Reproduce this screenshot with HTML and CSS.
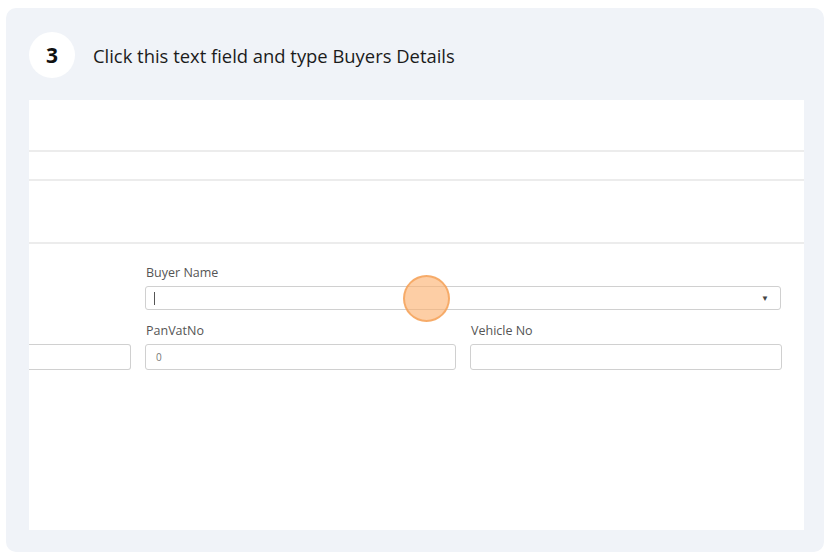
FILE: index.html
```html
<!DOCTYPE html>
<html>
<head>
<meta charset="utf-8">
<link rel="stylesheet" href="styles.css">
</head>
<body>
<div class="card">
  <div class="header">
    <div class="step">3</div>
    <div class="title">Click this text field and type Buyers Details</div>
  </div>
  <div class="shot">
    <div class="sec s1"></div>
    <div class="sec s2"></div>
    <div class="sec s3"></div>
    <div class="form">
      <div class="row row1">
        <div class="col spacer"></div>
        <div class="col wide">
          <div class="label">Buyer Name</div>
          <div class="input select"><span class="caret"></span><span class="arrow">▼</span></div>
        </div>
      </div>
      <div class="row row2">
        <div class="col left">
          <div class="label">&nbsp;</div>
          <div class="input cut"></div>
        </div>
        <div class="col mid">
          <div class="label">PanVatNo</div>
          <div class="input"><span class="val">0</span></div>
        </div>
        <div class="col right">
          <div class="label">Vehicle No</div>
          <div class="input"></div>
        </div>
      </div>
    </div>
    <div class="click"></div>
  </div>
</div>
</body>
</html>
```
FILE: styles.css
```css
html, body { margin: 0; padding: 0; background: #fff; }
body { font-family: "Open Sans", "Liberation Sans", sans-serif; }
.card {
  margin: 8px 6px 0 6px;
  width: 818px;
  height: 544px;
  box-sizing: border-box;
  background: #f0f3f8;
  border-radius: 10px;
  padding: 0 20px 22px 23px;
  display: flex;
  flex-direction: column;
}
.header {
  height: 92px;
  display: flex;
  align-items: center;
  padding-left: 0;
  flex-shrink: 0;
}
.step {
  width: 46px; height: 46px;
  border-radius: 50%;
  background: #fff;
  display: flex; align-items: center; justify-content: center;
  font-weight: 700; font-size: 21px; color: #111;
  margin-top: 2px;
}
.title {
  margin-left: 18px;
  font-size: 18.4px;
  color: #1b1b1b;
  margin-top: 2px;
}
.shot {
  position: relative;
  flex: 1;
  background: #fff;
  display: flex;
  flex-direction: column;
}
.sec { background: #fff; }
.s1 { height: 50px; border-bottom: 2px solid #ececec; }
.s2 { height: 27px; border-bottom: 2px solid #ececec; }
.s3 { height: 61px; border-bottom: 2px solid #ececec; }
.form { padding-top: 21px; }
.row { display: flex; }
.row1 { height: 58px; }
.col { display: flex; flex-direction: column; }
.spacer { width: 116px; }
.wide { width: 636px; }
.left { width: 102px; }
.mid { width: 311px; margin-left: 14px; }
.right { width: 312px; margin-left: 14px; }
.label {
  font-size: 12.5px;
  color: #555;
  height: 21px;
  padding-left: 1px;
  line-height: 16px;
}
.input {
  height: 24px;
  border: 1px solid #d0d0d0;
  border-radius: 3px;
  box-sizing: border-box;
  background: #fff;
  display: flex;
  align-items: center;
  position: relative;
}
.row2 .input { height: 26px; }
.cut { border-left: none; border-radius: 0 3px 3px 0; }
.caret { width: 1px; height: 13px; background: #555; margin-left: 8px; }
.arrow { position: absolute; right: 11px; top: 5px; font-size: 8px; color: #444; }
.val { font-size: 10px; color: #777; margin-left: 10px; }
.click {
  position: absolute;
  left: 374px; top: 175px;
  width: 47px; height: 47px;
  border-radius: 50%;
  background: rgba(251, 176, 110, 0.62);
  border: 2px solid rgba(244, 156, 80, 0.7);
  box-sizing: border-box;
}
```
